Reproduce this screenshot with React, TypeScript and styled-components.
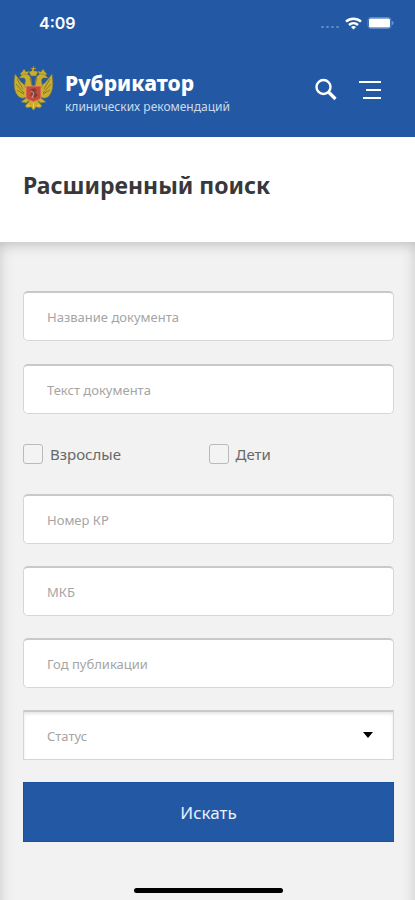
import React from "react";
import styled, { createGlobalStyle } from "styled-components";

const GlobalStyle = createGlobalStyle`
  *, *::before, *::after { box-sizing: border-box; }
  body {
    margin: 0;
    background: #f2f2f2;
    font-family: "Noto Sans", "Open Sans", sans-serif;
  }
  button, input, select { font: inherit; }
`;

const Page = styled.div`
  display: flex;
  flex-direction: column;
  min-height: 100vh;
`;

const TopBar = styled.header`
  background: #2359a4;
  color: #fff;
  padding-bottom: 20px;
`;

const StatusBar = styled.div`
  display: flex;
  align-items: center;
  justify-content: space-between;
  height: 46px;
  padding: 0 21px 0 39px;
`;

const Clock = styled.time`
  font: 600 16px/20px Inter, sans-serif;
`;

const StatusIcons = styled.div`
  display: flex;
  align-items: center;
  gap: 5px;
`;

const Brand = styled.div`
  display: flex;
  align-items: flex-start;
  padding: 20px 34px 0 13px;
`;

const BrandLink = styled.a`
  display: flex;
  align-items: flex-start;
  gap: 11px;
  color: inherit;
  text-decoration: none;
`;

const BrandText = styled.span`
  display: flex;
  flex-direction: column;
  padding-top: 3px;
`;

const BrandName = styled.span`
  font-size: 21px;
  line-height: 28px;
  font-weight: 800;
`;

const BrandNote = styled.span`
  color: #cbd9ee;
  font-size: 12px;
  line-height: 20px;
`;

const Actions = styled.div`
  display: flex;
  gap: 20px;
  margin: 12px 0 0 auto;
`;

const IconButton = styled.button`
  display: flex;
  padding: 0;
  border: 0;
  background: none;
  color: #fff;
`;

const TitlePanel = styled.section`
  padding: 31px 23px 40px;
  background: #fff;
`;

const Title = styled.h1`
  margin: 0;
  color: #38383a;
  font-size: 23px;
  line-height: 34px;
  font-weight: 700;
`;

const Content = styled.main`
  flex: 1;
  display: flex;
  flex-direction: column;
  padding: 49px 21px 7px 23px;
  background: #f2f2f2;
  box-shadow:
    inset 0 18px 14px -16px #bcbcbc,
    inset 16px 0 14px -16px #c8c8c8,
    inset -16px 0 14px -16px #c8c8c8;
`;

const Form = styled.form`
  display: flex;
  flex-direction: column;
  gap: 30px;
`;

const FieldGroup = styled.div`
  display: flex;
  flex-direction: column;
  gap: 23px;
`;

const TextField = styled.input`
  width: 100%;
  height: 50px;
  padding: 0 23px;
  border: 1px solid #d6d6d6;
  border-top: 2px solid #c9c9c9;
  border-radius: 5px;
  background: #fff;
  color: #555;
  font-size: 13px;
  &::placeholder { color: #a5a5a5; opacity: 1; }
`;

const LowerFields = styled(FieldGroup)`
  gap: 22px;
`;

const SelectBox = styled.div`
  display: grid;
  align-items: center;
  & > * { grid-area: 1 / 1; }
  & > svg { justify-self: end; margin-right: 21px; pointer-events: none; }
`;

const Select = styled.select`
  appearance: none;
  width: 100%;
  height: 50px;
  padding: 0 23px;
  border: 1px solid #d6d6d6;
  border-top: 2px solid #c9c9c9;
  border-radius: 0;
  background: #fff;
  box-shadow: inset 0 2px 3px #e6e6e6;
  color: #a5a5a5;
  font-size: 13px;
`;

const Checks = styled.div`
  display: grid;
  grid-template-columns: 1fr 1fr;
`;

const CheckLabel = styled.label`
  display: flex;
  align-items: center;
  gap: 7px;
  color: #686868;
  font-size: 15px;
  line-height: 20px;
`;

const Checkbox = styled.input`
  appearance: none;
  width: 20px;
  height: 20px;
  margin: 0;
  border: 1px solid #bababa;
  border-radius: 3px;
  background: #f3f3f3;
  &:checked { background: #2359a4; }
`;

const SubmitButton = styled.button`
  height: 60px;
  margin-top: -8px;
  border: 1px solid #1a50a0;
  background: #2359a4;
  color: #e7effa;
  font-size: 17px;
`;

const HomeIndicator = styled.div`
  align-self: center;
  width: 40%;
  height: 5px;
  margin-top: auto;
  border-radius: 3px;
  background: #000;
`;

function Emblem() {
  return (
    <svg width="41" height="45" viewBox="0 0 41 45" aria-hidden="true">
      <g fill="#c9ad2d" stroke="#776f37" strokeWidth=".5">
        <path d="M18 5h1V3h-1V2h2V0h1v2h2v1h-2v2h2l2 1-2 4h-5l-2-4z" />
        <path d="M9 6l2-3 2 3 3-1-2 5h-4L7 8zM32 6l-2-3-2 3-3-1 2 5h4l3-2z" />
        <path d="M2 8c-1 8-2 16 3 22 4 4 9 2 12-3l-3-8C9 19 7 14 2 8z" />
        <path d="M39 8c1 8 2 16-3 22-4 4-9 2-12-3l3-8c5 0 7-5 12-11z" />
        <path d="M19 19c0-7-2-11-7-11-3 0-4 2-6 4l5 0c3 2 0 5 1 9l5 5zM22 19c0-7 2-11 7-11 3 0 4 2 6 4l-5 0c-3 2 0 5-1 9l-5 5z" />
        <path d="M13 32l-5 4 5 1 4-3zM28 32l5 4-5 1-4-3z" />
        <path d="M17 34l-5 6 2 2 4-1 2 3h1l2-3 4 1 2-2-5-6z" />
      </g>
      <g fill="none" stroke="#766c2d" strokeWidth=".8">
        <path d="M4 13l6 10M3 18l8 9M4 24l7 4M37 13l-6 10M38 18l-8 9M37 24l-7 4M17 12l2 7M24 12l-2 7" />
      </g>
      <path d="M13 20h15v11c0 3-4 3-7.500 5C17 34 13 34 13 31z" fill="#c64b38" stroke="#e09a72" strokeWidth=".8" />
      <path d="M17 24l4-2 3 2-2 2 3 3-3 3-2-3-3 1 2-4z" fill="#7e3e3b" />
      <path d="M18 25l3 2-2 5" fill="none" stroke="#d0a097" />
      <path d="M14 39l3 1M24 40l3-1M20.500 37v5" stroke="#e2cf79" />
    </svg>
  );
}

const fieldsTop = ["Название документа", "Текст документа"];
const fieldsBottom = ["Номер КР", "МКБ", "Год публикации"];

export default function App() {
  return (
    <Page>
      <GlobalStyle />
      <TopBar>
        <StatusBar>
          <Clock>4:09</Clock>
          <StatusIcons aria-hidden="true">
            <svg width="20" height="12" viewBox="0 0 20 12" fill="#5f88c5">
              <rect x="1" y="9" width="3" height="2" rx="1" />
              <rect x="6" y="9" width="3" height="2" rx="1" />
              <rect x="11" y="9" width="3" height="2" rx="1" />
              <rect x="16" y="9" width="3" height="2" rx="1" />
            </svg>
            <svg width="17" height="13" viewBox="0 0 17 13" fill="none" stroke="#fff" strokeWidth="2.400">
              <path d="M1 4.700C5.300.7 11.700.7 16 4.700M4 8c2.600-2.400 6.400-2.400 9 0" />
              <path d="M8.500 12.500L6 10c1.500-1.200 3.500-1.200 5 0z" fill="#fff" stroke="none" />
            </svg>
            <svg width="27" height="12" viewBox="0 0 27 12">
              <rect x="1" y=".5" width="23" height="11" rx="3" fill="none" stroke="#5f88c5" />
              <rect x="2" y="1.500" width="21" height="9" rx="1.500" fill="#fff" />
              <path d="M25 4c2 .5 2 3.500 0 4z" fill="#6f96cf" />
            </svg>
          </StatusIcons>
        </StatusBar>
        <Brand>
          <BrandLink href="#">
            <Emblem />
            <BrandText>
              <BrandName>Рубрикатор</BrandName>
              <BrandNote>клинических рекомендаций</BrandNote>
            </BrandText>
          </BrandLink>
          <Actions>
            <IconButton type="button" aria-label="Поиск">
              <svg width="26" height="24" viewBox="0 0 26 24" fill="none" stroke="#fff">
                <circle cx="10.500" cy="9" r="7" strokeWidth="2.400" />
                <path d="M15.500 14l7 7" strokeWidth="3.200" />
              </svg>
            </IconButton>
            <IconButton type="button" aria-label="Меню">
              <svg width="22" height="24" viewBox="0 0 22 24" fill="#fff">
                <rect x="0" y="3" width="22" height="2" />
                <rect x="7" y="11" width="15" height="2" />
                <rect x="4" y="19" width="18" height="2" />
              </svg>
            </IconButton>
          </Actions>
        </Brand>
      </TopBar>
      <TitlePanel>
        <Title>Расширенный поиск</Title>
      </TitlePanel>
      <Content>
        <Form>
          <FieldGroup>
            {fieldsTop.map((name) => (
              <TextField key={name} type="text" placeholder={name} aria-label={name} />
            ))}
          </FieldGroup>
          <Checks>
            <CheckLabel>
              <Checkbox type="checkbox" />
              Взрослые
            </CheckLabel>
            <CheckLabel>
              <Checkbox type="checkbox" />
              Дети
            </CheckLabel>
          </Checks>
          <LowerFields>
            {fieldsBottom.map((name) => (
              <TextField key={name} type="text" placeholder={name} aria-label={name} />
            ))}
            <SelectBox>
              <Select aria-label="Статус" defaultValue="">
                <option value="">Статус</option>
              </Select>
              <svg width="10" height="6" viewBox="0 0 10 6" aria-hidden="true">
                <path d="M0 0h10L5 6z" />
              </svg>
            </SelectBox>
          </LowerFields>
          <SubmitButton type="submit">Искать</SubmitButton>
        </Form>
        <HomeIndicator />
      </Content>
    </Page>
  );
}
